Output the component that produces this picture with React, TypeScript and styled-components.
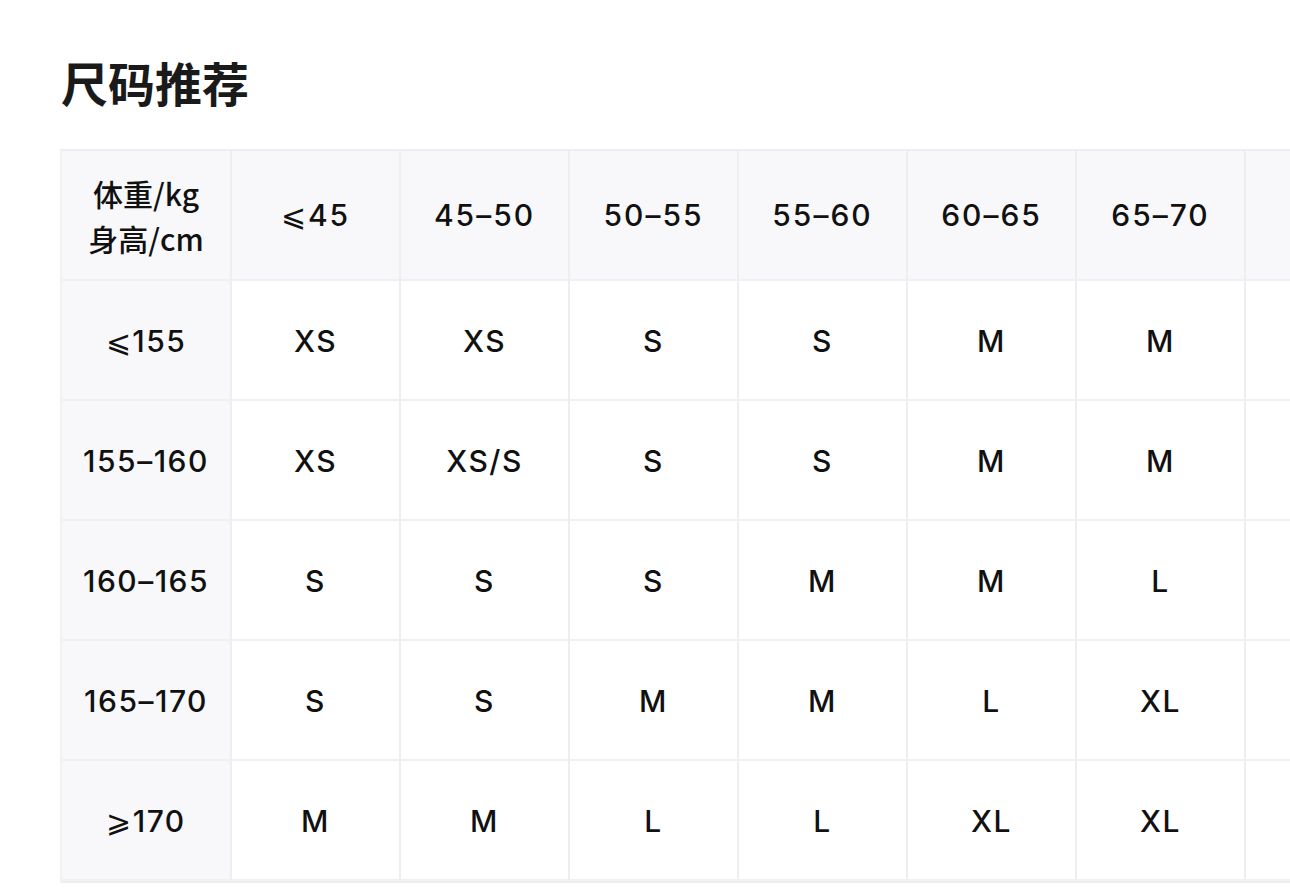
import React from "react";
import styled, { createGlobalStyle } from "styled-components";

const Global = createGlobalStyle`
  html, body { margin: 0; padding: 0; background: #fff; overflow: hidden; }
  body { font-family: "Inter", "Noto Sans CJK SC", sans-serif; color: #111; }
`;

const Page = styled.div`
  width: 1290px;
  height: 890px;
  overflow: hidden;
  padding: 52px 0 0 60px;
  box-sizing: border-box;
`;

const Title = styled.h1`
  margin: 0 0 37px 1px;
  font-size: 47px;
  line-height: 60px;
  font-weight: 700;
  color: #1a1a1a;
  font-family: "Noto Sans CJK SC", sans-serif;
`;

const Table = styled.div`
  display: grid;
  grid-template-columns: 170px repeat(7, 169px);
  grid-template-rows: 130px repeat(5, 120px);
  width: max-content;
  border-top: 2px solid #eeeef0;
  border-left: 2px solid #f2f2f4;
  border-bottom: 2px solid #eeeef0;
`;

const Cell = styled.div<{ $shade?: boolean; $head?: boolean }>`
  display: flex;
  align-items: center;
  justify-content: center;
  text-align: center;
  background: ${(p) => (p.$shade ? "#f8f8fa" : "#fff")};
  border-right: 2px solid #eeeef0;
  border-bottom: 2px solid #f0f0f2;
  font-size: 30px;
  font-weight: 500;
  letter-spacing: ${(p) => (p.$head ? "2px" : "1.5px")};
  color: #111;
  box-sizing: border-box;
  padding-top: ${(p) => (p.$head ? "0" : "2px")};
`;

const Corner = styled(Cell)`
  flex-direction: column;
  font-family: "Noto Sans CJK SC", sans-serif;
  font-size: 30px;
  line-height: 45px;
  letter-spacing: 0;
  font-weight: 500;
  padding-top: 2px;
`;

const weights = ["⩽45", "45–50", "50–55", "55–60", "60–65", "65–70", ""];
const rows: [string, string[]][] = [
  ["⩽155", ["XS", "XS", "S", "S", "M", "M", ""]],
  ["155–160", ["XS", "XS/S", "S", "S", "M", "M", ""]],
  ["160–165", ["S", "S", "S", "M", "M", "L", ""]],
  ["165–170", ["S", "S", "M", "M", "L", "XL", ""]],
  ["⩾170", ["M", "M", "L", "L", "XL", "XL", ""]],
];

export default function App() {
  return (
    <Page>
      <Global />
      <Title>尺码推荐</Title>
      <Table>
        <Corner $shade>
          <span>体重/kg</span>
          <span>身高/cm</span>
        </Corner>
        {weights.map((w, i) => (
          <Cell $shade $head key={i}>{w}</Cell>
        ))}
        {rows.map(([h, vals]) => (
          <React.Fragment key={h}>
            <Cell $shade>{h}</Cell>
            {vals.map((v, i) => (
              <Cell key={i}>{v}</Cell>
            ))}
          </React.Fragment>
        ))}
      </Table>
    </Page>
  );
}
